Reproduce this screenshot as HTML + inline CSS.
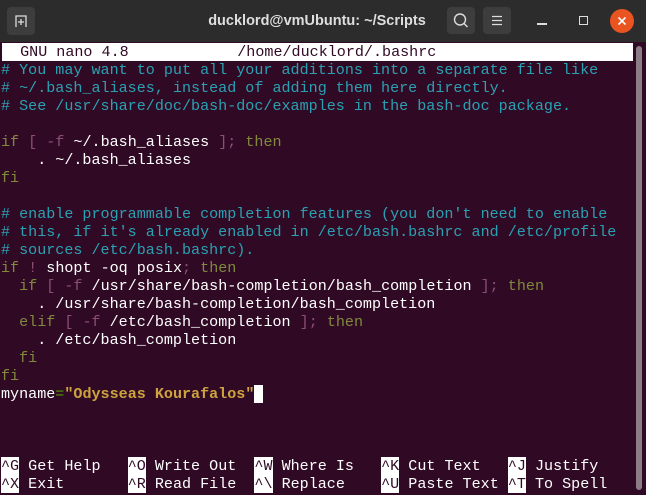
<!DOCTYPE html>
<html><head><meta charset="utf-8"><style>
*{margin:0;padding:0;box-sizing:border-box}
html,body{width:646px;height:495px;overflow:hidden;background:#2c2c2c}
.title{position:absolute;left:0;top:0;width:646px;height:42px;background:#2c2c2c}
.btn{position:absolute;top:7px;width:28px;height:27px;background:#3d3d3d;border-radius:4px}
.tt{position:absolute;left:190px;width:254px;top:13px;text-align:center;font:bold 14.5px "Liberation Sans",sans-serif;color:#dedede}
.term{position:absolute;left:0;top:42px;width:646px;height:453px;background:#300a24;overflow:hidden}
.lines{position:absolute;left:1px;top:1px;font-family:"Liberation Mono",monospace;font-size:15.08px;line-height:18px;color:#ffffff}
.row{height:18px;white-space:pre}
.hdr{background:#fff;color:#300a24;width:631px;margin-left:1px}
.c{color:#2aa1b3}
.k{color:#80893c}
.p{color:#8c4d76}
.s{color:#cda23f;font-weight:bold}
.e{color:#4e9a06}
.key{background:#fff;color:#300a24}
.cur{background:#fff}
.sb{position:absolute;left:636px;top:4px;width:6px;height:444px;background:#8a7d86;border-radius:3px}
</style></head><body>
<div class="title">
 <div class="btn" style="left:7px;top:7px;width:28px;height:28px">
  <svg width="28" height="28" viewBox="0 0 28 28"><path d="M9 20V9h10v11" fill="none" stroke="#ddd" stroke-width="1.3"/><path d="M14 12v6M11 15h6" stroke="#ddd" stroke-width="1.3"/></svg>
 </div>
 <div class="tt">ducklord@vmUbuntu: ~/Scripts</div>
 <div class="btn" style="left:447px">
  <svg width="28" height="27" viewBox="0 0 28 27"><circle cx="13" cy="12.5" r="5.5" fill="none" stroke="#ddd" stroke-width="1.4"/><path d="M17 16.5l3.5 3.5" stroke="#ddd" stroke-width="1.4"/></svg>
 </div>
 <div class="btn" style="left:483px">
  <svg width="28" height="27" viewBox="0 0 28 27"><path d="M9 9.5h10M9 13.5h10M9 17.5h10" stroke="#ddd" stroke-width="1.3"/></svg>
 </div>
 <div style="position:absolute;left:537px;top:23px;width:10px;height:1.5px;background:#ddd"></div>
 <div style="position:absolute;left:579px;top:16px;width:9px;height:9px;border:1.3px solid #ddd"></div>
 <div style="position:absolute;left:610px;top:9px;width:24px;height:24px;border-radius:50%;background:#e95420">
  <svg width="24" height="24" viewBox="0 0 24 24"><path d="M8.5 8.5l7 7M15.5 8.5l-7 7" stroke="#fff" stroke-width="1.6"/></svg>
 </div>
</div>
<div class="term">
<div class="lines">
<div class="row hdr">  GNU nano 4.8            /home/ducklord/.bashrc</div>
<div class="row c"># You may want to put all your additions into a separate file like</div>
<div class="row c"># ~/.bash_aliases, instead of adding them here directly.</div>
<div class="row c"># See /usr/share/doc/bash-doc/examples in the bash-doc package.</div>
<div class="row"> </div>
<div class="row"><span class="k">if</span> <span class="p">[ -f</span> ~/.bash_aliases <span class="p">];</span> <span class="k">then</span></div>
<div class="row">    . ~/.bash_aliases</div>
<div class="row"><span class="k">fi</span></div>
<div class="row"> </div>
<div class="row c"># enable programmable completion features (you don't need to enable</div>
<div class="row c"># this, if it's already enabled in /etc/bash.bashrc and /etc/profile</div>
<div class="row c"># sources /etc/bash.bashrc).</div>
<div class="row"><span class="k">if</span> <span class="p">!</span> shopt -oq posix<span class="p">;</span> <span class="k">then</span></div>
<div class="row">  <span class="k">if</span> <span class="p">[ -f</span> /usr/share/bash-completion/bash_completion <span class="p">];</span> <span class="k">then</span></div>
<div class="row">    . /usr/share/bash-completion/bash_completion</div>
<div class="row">  <span class="k">elif</span> <span class="p">[ -f</span> /etc/bash_completion <span class="p">];</span> <span class="k">then</span></div>
<div class="row">    . /etc/bash_completion</div>
<div class="row">  <span class="k">fi</span></div>
<div class="row"><span class="k">fi</span></div>
<div class="row">myname<span class="e">=</span><span class="s">"Odysseas Kourafalos"</span><span class="cur"> </span></div>
<div class="row"> </div>
<div class="row"> </div>
<div class="row"> </div>
<div class="row"><span class="key">^G</span> Get Help   <span class="key">^O</span> Write Out  <span class="key">^W</span> Where Is   <span class="key">^K</span> Cut Text   <span class="key">^J</span> Justify</div>
<div class="row"><span class="key">^X</span> Exit       <span class="key">^R</span> Read File  <span class="key">^\</span> Replace    <span class="key">^U</span> Paste Text <span class="key">^T</span> To Spell</div>
</div>
<div class="sb"></div>
</div>
</body></html>
